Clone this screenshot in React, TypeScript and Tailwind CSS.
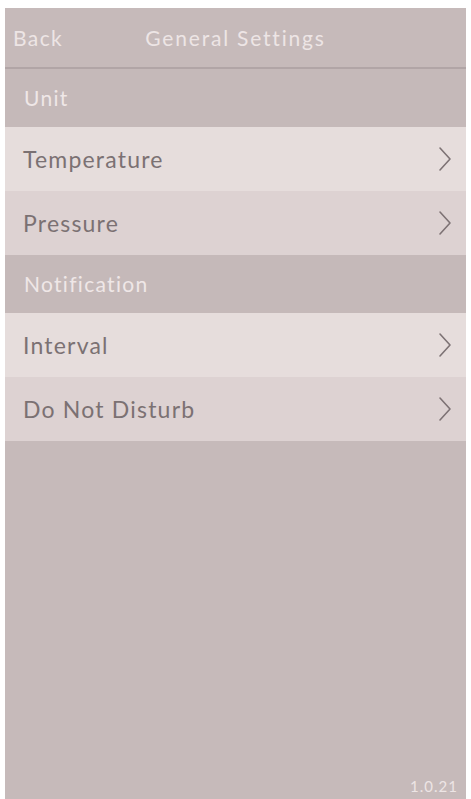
import React from "react";

const font = { fontFamily: "Lato, 'Open Sans', sans-serif" };

function Chevron() {
  return (
    <svg width="14" height="26" viewBox="0 0 14 26" fill="none" className="shrink-0">
      <path d="M2 2 L12 13 L2 24" stroke="#7d7274" strokeWidth="1.6" strokeLinecap="round" strokeLinejoin="round" />
    </svg>
  );
}

function Row({ label, light }: { label: string; light?: boolean }) {
  return (
    <div className={`flex items-center justify-between pl-[18px] pr-[14px] h-[64px] ${light ? "bg-[#e6dddc]" : "bg-[#ddd2d2]"}`}>
      <span className="text-[23px] text-[#7b7173] tracking-[1.2px]">{label}</span>
      <Chevron />
    </div>
  );
}

function Section({ label }: { label: string }) {
  return (
    <div className="flex items-center h-[58px] pl-[19px] bg-[#c5b9b9]">
      <span className="text-[21px] text-[#efe7e7] tracking-[1.3px]">{label}</span>
    </div>
  );
}

export default function App() {
  return (
    <div className="w-[471px] h-[799px] bg-white pt-[8px] pl-[5px] pr-[5px] overflow-hidden" style={font}>
      <div className="h-[791px] bg-[#c6baba] flex flex-col">
        <div className="relative h-[61px] flex items-center border-b-2 border-[#b1a5a6]">
          <span className="pl-[8px] text-[21px] text-[#ede5e5] tracking-[1.4px]">Back</span>
          <span className="absolute left-0 right-0 text-center text-[21px] text-[#ede5e5] tracking-[1.8px] pointer-events-none">General Settings</span>
        </div>
        <Section label="Unit" />
        <Row label="Temperature" light />
        <Row label="Pressure" />
        <Section label="Notification" />
        <Row label="Interval" light />
        <Row label="Do Not Disturb" />
        <div className="flex-1 flex items-end justify-end pr-[8px] pb-[2px]">
          <span className="text-[15px] text-[#ede5e5] tracking-[1px]">1.0.21</span>
        </div>
      </div>
    </div>
  );
}
